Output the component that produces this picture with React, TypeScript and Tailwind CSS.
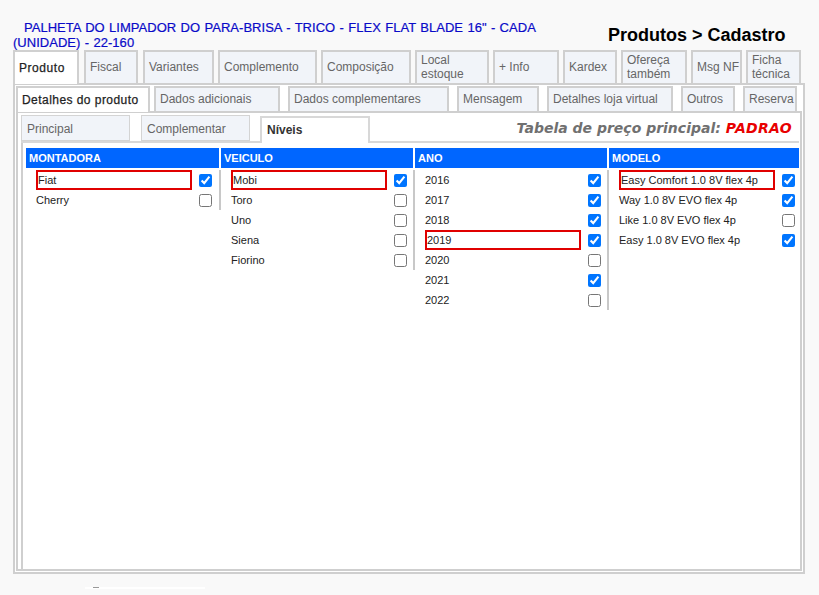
const sans = "font-['Liberation_Sans',Arial,sans-serif]";

const topTabs = [
  { label: "Produto", cls: "w-[66px]", active: true },
  { label: "Fiscal", cls: "w-[54px] ml-[5px]" },
  { label: "Variantes", cls: "w-[71px] ml-[5px]" },
  { label: "Complemento", cls: "w-[99px] ml-[4px]" },
  { label: "Composição", cls: "w-[90px] ml-[4px]" },
  { label: "Local estoque", cls: "w-[74px] ml-[4px]" },
  { label: "+ Info", cls: "w-[66px] ml-[4px]" },
  { label: "Kardex", cls: "w-[54px] ml-[4px]" },
  { label: "Ofereça também", cls: "w-[66px] ml-[4px]" },
  { label: "Msg NF", cls: "w-[51px] ml-[4px] whitespace-nowrap" },
  { label: "Ficha técnica", cls: "w-[55px] ml-[4px]" },
];

const midTabs = [
  { label: "Detalhes do produto", cls: "w-[134px]", active: true },
  { label: "Dados adicionais", cls: "w-[126px] ml-[4px]" },
  { label: "Dados complementares", cls: "w-[161px] ml-[8px]" },
  { label: "Mensagem", cls: "w-[82px] ml-[8px]" },
  { label: "Detalhes loja virtual", cls: "w-[126px] ml-[8px]" },
  { label: "Outros", cls: "w-[54px] ml-[8px]" },
  { label: "Reserva", cls: "w-[54px] ml-[8px]" },
];

const columns = [
  {
    title: "MONTADORA",
    line: "h-[40px]",
    width: "w-[193px]",
    items: [
      { name: "Fiat", on: true, picked: true },
      { name: "Cherry", on: false },
    ],
  },
  {
    title: "VEICULO",
    line: "h-[100px]",
    width: "w-[192px]",
    items: [
      { name: "Mobi", on: true, picked: true },
      { name: "Toro", on: false },
      { name: "Uno", on: false },
      { name: "Siena", on: false },
      { name: "Fiorino", on: false },
    ],
  },
  {
    title: "ANO",
    line: "h-[140px]",
    width: "w-[192px]",
    items: [
      { name: "2016", on: true },
      { name: "2017", on: true },
      { name: "2018", on: true },
      { name: "2019", on: true, picked: true },
      { name: "2020", on: false },
      { name: "2021", on: true },
      { name: "2022", on: false },
    ],
  },
  {
    title: "MODELO",
    line: "",
    width: "w-[190px]",
    items: [
      { name: "Easy Comfort 1.0 8V flex 4p", on: true, picked: true },
      { name: "Way 1.0 8V EVO flex 4p", on: true },
      { name: "Like 1.0 8V EVO flex 4p", on: false },
      { name: "Easy 1.0 8V EVO flex 4p", on: true },
    ],
  },
];

type TabProps = { label: string; cls: string; active?: boolean };

function TopTab({ label, cls, active }: TabProps) {
  return (
    <div
      className={
        "flex items-center pl-[4px] pr-[2px] border-2 border-b-0 text-[12px] leading-[14px] " +
        cls +
        (active
          ? " h-[34px] -mb-px bg-white border-[#d0d0d0] text-[#222] tracking-[0.55px] [-webkit-text-stroke:0.25px_#222]"
          : " h-[33px] pb-[2px] bg-[#f1f4f9] border-[#cfcfcf] text-[#666]")
      }
    >
      {label}
    </div>
  );
}

function MidTab({ label, cls, active }: TabProps) {
  return (
    <div
      className={
        "flex items-center pl-[4px] border-2 border-b-0 text-[12px] leading-[14px] whitespace-nowrap " +
        cls +
        (active
          ? " h-[26px] -mb-px bg-white border-[#d0d0d0] text-[#222] tracking-[0.45px] [-webkit-text-stroke:0.25px_#222]"
          : " h-[25px] pb-[2px] bg-[#f1f4f9] border-[#cfcfcf] text-[#666]")
      }
    >
      {label}
    </div>
  );
}

function Column({ col }: { col: (typeof columns)[number] }) {
  return (
    <div className={col.width}>
      <div className="h-[20px] pl-[3px] bg-[#0066ff] text-white text-[11px] font-bold leading-[20px]">
        {col.title}
      </div>
      <div className="relative pt-[2px]">
        {col.line && (
          <div className={"absolute top-[2px] right-[-2px] w-[2px] bg-[#c8c8c8] " + col.line} />
        )}
        {col.items.map((it) => (
          <div key={it.name} className="flex items-center h-[20px] pl-[10px]">
            <div
              className={
                "w-[156px] h-[20px] text-[11px] leading-[16px] text-[#222] whitespace-nowrap " +
                (it.picked ? "border-2 border-[#e00000]" : "pt-[2px]")
              }
            >
              {it.name}
            </div>
            <input type="checkbox" defaultChecked={it.on} className="ml-[7px] w-[13px] h-[13px] m-0" />
          </div>
        ))}
      </div>
    </div>
  );
}

export default function App() {
  return (
    <div className={"w-[819px] h-[595px] overflow-hidden bg-[#f9f9f9] " + sans}>
      <div className="flex items-start h-[50px] pl-[13px] pt-[20px]">
        <div className="w-[570px] indent-[11px] text-[13px] leading-[15px] text-[#0a0ac8] [-webkit-text-stroke:0.2px_#0a0ac8] tracking-[0.03px] [word-spacing:0.7px]">
          PALHETA DO LIMPADOR DO PARA-BRISA - TRICO - FLEX FLAT BLADE 16" - CADA (UNIDADE) - 22-160
        </div>
        <div className="ml-[25px] mt-[5px] whitespace-nowrap text-[18px] leading-[20px] font-bold text-black">
          Produtos &gt; Cadastro
        </div>
      </div>

      <div className="ml-[13px] w-[792px]">
        <div className="flex relative z-10">
          {topTabs.map((t) => (
            <TopTab key={t.label} {...t} />
          ))}
        </div>

        <div className="h-[491px] border-2 border-[#cfcfcf] bg-white pl-px pr-px pt-[1px] pb-px">
          <div className="flex relative z-10 pr-[2px]">
            {midTabs.map((t) => (
              <MidTab key={t.label} {...t} />
            ))}
          </div>

          <div className="h-[460px] border-2 border-[#cfcfcf] bg-white pl-[3px] pt-[3px]">
            <div className="flex items-end h-[27px] border-b-2 border-[#d8d8d8] mr-[1px]">
              <div className="flex items-center w-[109px] h-[26px] pl-[5px] pt-px border border-[#d4d4d4] bg-[#f1f4f9] text-[12px] text-[#666]">
                Principal
              </div>
              <div className="flex items-center w-[109px] h-[26px] ml-[11px] pl-[5px] pt-px border border-[#d4d4d4] bg-[#f1f4f9] text-[12px] text-[#666]">
                Complementar
              </div>
              <div className="flex items-center w-[110px] h-[27px] -mb-[2px] ml-[10px] pl-[5px] pb-[2px] border-2 border-b-0 border-[#d8d8d8] bg-white text-[12px] font-bold text-[#333]">
                Níveis
              </div>
              <div className="ml-auto mr-[7px] pb-[2px] whitespace-nowrap font-['DejaVu_Sans',sans-serif] text-[14px] font-bold italic text-[#707070]">
                Tabela de preço principal: <span className="text-[#e80000] tracking-[0.3px]">PADRAO</span>
              </div>
            </div>

            <div className="h-[426px] ml-0 border-l-2 border-[#cfcfcf] pl-[3px] pt-[5px]">
              <div className="flex gap-[2px]">
                {columns.map((c) => (
                  <Column key={c.title} col={c} />
                ))}
              </div>
            </div>
          </div>
        </div>
      </div>

      <div className="relative mt-[13px] ml-[85px] w-[120px] h-[2px] bg-white">
        <div className="absolute left-[8px] top-0 w-[6px] h-px bg-[#999]" />
      </div>
    </div>
  );
}
